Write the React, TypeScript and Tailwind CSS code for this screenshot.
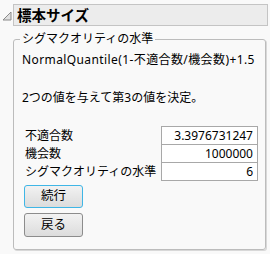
import React from "react";

export default function App() {
  const font = { fontFamily: '"Noto Sans", "Noto Sans CJK JP", sans-serif' };
  return (
    <div
      className="w-[270px] h-[254px] bg-[#f9f9f9] text-black overflow-hidden"
      style={font}
    >
      <div className="flex items-start pt-[4px]">
        <div className="w-[13px] h-[22px] flex items-center justify-center">
          <svg width="10" height="10" viewBox="0 0 10 10" className="ml-[1px] mt-[2px]">
            <polygon points="1,9 9,9 9,1" fill="#e0e0e0" stroke="#8a8a8a" strokeWidth="1" />
          </svg>
        </div>
        <div className="w-[255px] h-[22px] bg-[#ececec] border border-[#c4c4c4] flex items-center pl-[3px]">
          <span className="text-[14.5px] font-bold leading-none">標本サイズ</span>
        </div>
      </div>

      <div className="relative ml-[13px] mt-[13px] w-[253px] h-[211px] border border-[#bcbcbc] rounded-[3px] shadow-[1px_1px_0_#d8d8d8]">
        <span className="absolute left-[6px] top-[-9px] px-[2px] bg-[#f9f9f9] text-[12px] leading-[16px]">
          シグマクオリティの水準
        </span>
        <div className="pl-[8px] pr-[7px] pt-[12px] text-[12px] leading-[16px]">
          <div className="tracking-[0.4px] whitespace-nowrap">NormalQuantile(1-不適合数/機会数)+1.5</div>
          <div className="mt-[22px]">2つの値を与えて第3の値を決定。</div>
          <div className="mt-[20px] flex">
            <div className="flex flex-col pl-[3px] flex-1">
              <div className="h-[19px] flex items-center">不適合数</div>
              <div className="h-[18px] flex items-center">機会数</div>
              <div className="h-[18px] flex items-center">シグマクオリティの水準</div>
            </div>
            <div className="flex flex-col w-[97px]">
              <div className="h-[19px] border border-[#a8a8a8] bg-white flex items-center justify-end pr-[4px]">3.3976731247</div>
              <div className="h-[18px] border border-t-0 border-[#a8a8a8] bg-white flex items-center justify-end pr-[4px]">1000000</div>
              <div className="h-[18px] border border-t-0 border-[#a8a8a8] bg-white flex items-center justify-end pr-[4px]">6</div>
            </div>
          </div>
          <div className="mt-[4px] flex flex-col gap-[5px] pl-[2px]">
            <button className="w-[59px] h-[23px] rounded-[3px] border border-[#3fb6e6] bg-gradient-to-b from-[#f2f2f2] to-[#dcdcdc] text-[12.5px] leading-none flex items-center justify-center">
              続行
            </button>
            <button className="w-[59px] h-[24px] rounded-[3px] border border-[#8c8c8c] bg-gradient-to-b from-[#f2f2f2] to-[#dcdcdc] text-[12.5px] leading-none flex items-center justify-center">
              戻る
            </button>
          </div>
        </div>
      </div>
    </div>
  );
}
